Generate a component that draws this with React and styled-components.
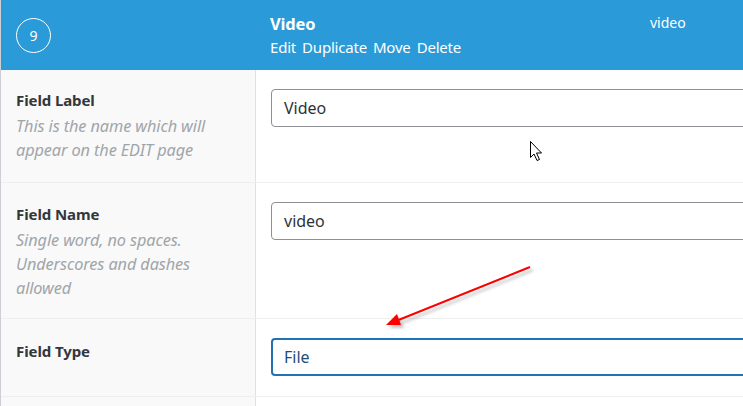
import styled, { createGlobalStyle } from 'styled-components'

const GlobalStyle = createGlobalStyle`
  html, body {
    margin: 0;
    padding: 0;
    background: #fff;
    overflow: hidden;
  }
  body {
    font-family: "Noto Sans", "Open Sans", sans-serif;
    color: #1d2327;
  }
`

const Panel = styled.div`
  position: relative;
  width: 900px;
  border-left: 1px solid #ccd0d4;
`

const Header = styled.div`
  display: grid;
  grid-template-columns: 255px 380px 1fr;
  height: 70px;
  background: #2a9bd8;
  color: #fff;
`

const OrderCell = styled.div`
  display: flex;
  align-items: center;
  padding-left: 15px;
`

const OrderBadge = styled.div`
  width: 33px;
  height: 33px;
  border: 1.5px solid #fff;
  border-radius: 50%;
  display: flex;
  align-items: center;
  justify-content: center;
  font-size: 14px;
  margin-top: 1px;
`

const TitleCell = styled.div`
  padding: 13px 0 0 14px;
`

const Title = styled.div`
  font-size: 16.5px;
  font-weight: 700;
  line-height: 21px;
  letter-spacing: -0.2px;
`

const Actions = styled.div`
  display: flex;
  gap: 6px;
  font-size: 15px;
  line-height: 18px;
  margin-top: 4px;
  letter-spacing: -0.2px;
`

const KeyCell = styled.div`
  padding: 13px 0 0 14px;
  font-size: 14px;
`

const Row = styled.div`
  display: grid;
  grid-template-columns: 255px 1fr;
  min-height: ${p => p.$height}px;
  border-top: ${p => (p.$first ? 'none' : '1px solid #eeeeee')};
`

const LabelCell = styled.div`
  background: #f9f9f9;
  border-right: 1px solid #e1e1e1;
  padding: ${p => p.$top}px 15px 14px 15px;
`

const LabelTitle = styled.div`
  font-size: 15px;
  font-weight: 700;
  line-height: 20px;
  color: #32373c;
  letter-spacing: -0.1px;
`

const LabelHint = styled.div`
  margin-top: 4px;
  font-size: 16.3px;
  font-style: italic;
  line-height: 24px;
  color: #a0a5aa;
  letter-spacing: -0.1px;
`

const InputCell = styled.div`
  padding: 19px 15px;
`

const TextInput = styled.div`
  box-sizing: border-box;
  height: 38px;
  display: flex;
  align-items: center;
  padding-left: ${p => (p.$focused ? 11 : 12)}px;
  border: ${p => (p.$focused ? '2px solid #2271b1' : '1px solid #8c8f94')};
  border-radius: 4px;
  font-size: 16px;
  color: ${p => (p.$focused ? '#1f4e75' : '#2c3338')};
  background: #fff;
`

const Overlay = styled.svg`
  position: absolute;
  left: 0;
  top: 0;
  pointer-events: none;
`

export default function App() {
  return (
    <>
      <GlobalStyle />
      <Panel>
        <Header>
          <OrderCell>
            <OrderBadge>9</OrderBadge>
          </OrderCell>
          <TitleCell>
            <Title>Video</Title>
            <Actions>
              <span>Edit</span>
              <span>Duplicate</span>
              <span>Move</span>
              <span>Delete</span>
            </Actions>
          </TitleCell>
          <KeyCell>video</KeyCell>
        </Header>

        <Row $first $height={112}>
          <LabelCell $top={20}>
            <LabelTitle>Field Label</LabelTitle>
            <LabelHint>
              This is the name which will
              <br />
              appear on the EDIT page
            </LabelHint>
          </LabelCell>
          <InputCell>
            <TextInput>Video</TextInput>
          </InputCell>
        </Row>

        <Row $height={135}>
          <LabelCell $top={21}>
            <LabelTitle>Field Name</LabelTitle>
            <LabelHint>
              Single word, no spaces.
              <br />
              Underscores and dashes
              <br />
              allowed
            </LabelHint>
          </LabelCell>
          <InputCell>
            <TextInput>video</TextInput>
          </InputCell>
        </Row>

        <Row $height={77}>
          <LabelCell $top={22}>
            <LabelTitle>Field Type</LabelTitle>
          </LabelCell>
          <InputCell>
            <TextInput $focused>File</TextInput>
          </InputCell>
        </Row>

        <Row $height={30}>
          <LabelCell $top={0} />
          <InputCell />
        </Row>

        <Overlay width="743" height="406" viewBox="0 0 743 406">
          <defs>
            <filter id="sh" x="-20%" y="-20%" width="140%" height="140%">
              <feGaussianBlur stdDeviation="1.5" />
            </filter>
          </defs>
          <g transform="translate(3,3)" opacity="0.35" filter="url(#sh)">
            <line x1="529" y1="267" x2="395" y2="321" stroke="#555" strokeWidth="2" />
            <polygon points="385,325 396,314 400,325" fill="#555" />
          </g>
          <line x1="529" y1="267" x2="395" y2="321" stroke="#ff0000" strokeWidth="2" />
          <polygon points="385,325 396,314 400,325" fill="#ff0000" />
          <path
            d="M529.5 141.5 L529.5 157.5 L533 154 L536 160.5 L538.5 159.5 L535.5 153 L540.5 153 Z"
            fill="#fff"
            stroke="#000"
            strokeWidth="1"
            strokeLinejoin="miter"
          />
        </Overlay>
      </Panel>
    </>
  )
}
